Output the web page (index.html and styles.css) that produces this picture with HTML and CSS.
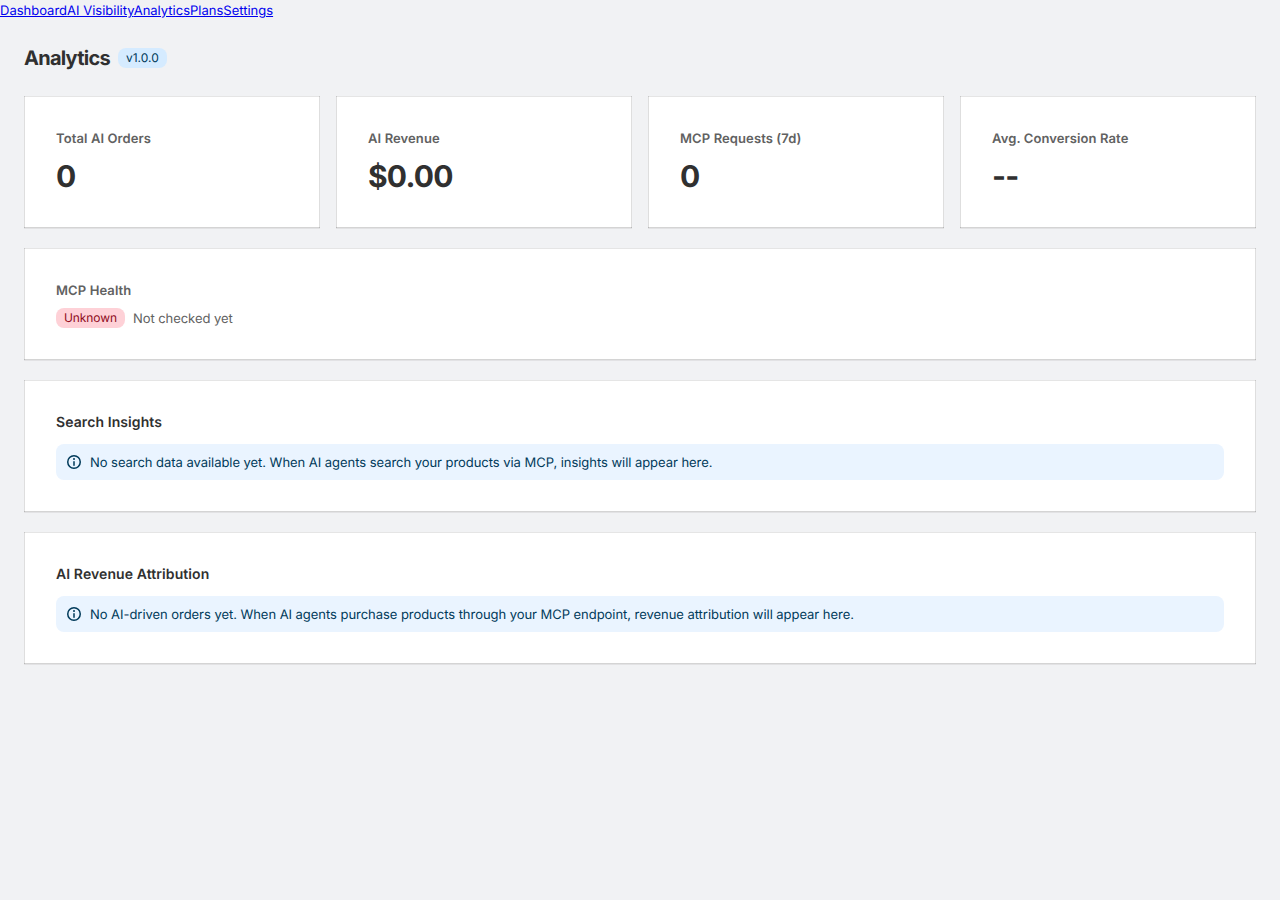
FILE: index.html
```html
<!DOCTYPE html>
<html lang="en">

<head>
    <meta charset="UTF-8">
    <meta name="viewport" content="width=device-width, initial-scale=1.0">
    <title>Analytics</title>
    <link rel="stylesheet" href="styles.css">
</head>

<body>
    <nav class="nav"><a href="#">Dashboard</a><a href="#">AI Visibility</a><a href="#">Analytics</a><a href="#">Plans</a><a href="#">Settings</a></nav>

    <div class="page">
        <div class="page-header">
            <h1>Analytics</h1>
            <span class="badge badge-info">v1.0.0</span>
        </div>

        <!-- Stats -->
        <div class="stats">
            <div class="card">
                <h3>Total AI Orders</h3>
                <p class="value">0</p>
            </div>
            <div class="card">
                <h3>AI Revenue</h3>
                <p class="value">$0.00</p>
            </div>
            <div class="card">
                <h3>MCP Requests (7d)</h3>
                <p class="value">0</p>
            </div>
            <div class="card">
                <h3>Avg. Conversion Rate</h3>
                <p class="value">--</p>
            </div>
        </div>

        <!-- MCP Health -->
        <div class="card">
            <h3>MCP Health</h3>
            <div class="health">
                <span class="badge badge-critical">Unknown</span>
                <span class="subdued">Not checked yet</span>
            </div>
        </div>

        <!-- Search Insights -->
        <div class="card">
            <h2>Search Insights</h2>
            <div class="banner">
                <svg class="icon" viewBox="0 0 20 20">
                    <path d="M10 14a.75.75 0 0 1-.75-.75v-3.5a.75.75 0 0 1 1.5 0v3.5a.75.75 0 0 1-.75.75Z" />
                    <path d="M9 7a1 1 0 1 1 2 0 1 1 0 0 1-2 0Z" />
                    <path fill-rule="evenodd" d="M17 10a7 7 0 1 1-14 0 7 7 0 0 1 14 0Zm-1.5 0a5.5 5.5 0 1 1-11 0 5.5 5.5 0 0 1 11 0Z" />
                </svg>
                <p>No search data available yet. When AI agents search your products via MCP, insights will appear here.</p>
            </div>
        </div>

        <!-- AI Revenue Attribution -->
        <div class="card">
            <h2>AI Revenue Attribution</h2>
            <div class="banner">
                <svg class="icon" viewBox="0 0 20 20">
                    <path d="M10 14a.75.75 0 0 1-.75-.75v-3.5a.75.75 0 0 1 1.5 0v3.5a.75.75 0 0 1-.75.75Z" />
                    <path d="M9 7a1 1 0 1 1 2 0 1 1 0 0 1-2 0Z" />
                    <path fill-rule="evenodd" d="M17 10a7 7 0 1 1-14 0 7 7 0 0 1 14 0Zm-1.5 0a5.5 5.5 0 1 1-11 0 5.5 5.5 0 0 1 11 0Z" />
                </svg>
                <p>No AI-driven orders yet. When AI agents purchase products through your MCP endpoint, revenue attribution will appear here.</p>
            </div>
        </div>
    </div>
</body>

</html>
```
FILE: styles.css
```css
* {
    box-sizing: border-box;
}

body {
    margin: 0;
    background: #f1f2f4;
    color: #303030;
    font-family: Inter, sans-serif;
    font-size: 13px;
    font-weight: 400;
    line-height: 20px;
    text-rendering: geometricPrecision;
}

h1,
h2,
h3,
p {
    margin: 0;
}

.nav {
    padding-top: 1px;
}

.nav a {
    color: #0000ee;
}

.page {
    display: flex;
    flex-direction: column;
    gap: 20px;
    padding: 23px 24px 24px;
}

/* Title */
.page-header {
    display: flex;
    align-items: center;
    gap: 8px;
    height: 28px;
    margin-bottom: 4px;
}

h1 {
    font-size: 20px;
    font-weight: 650;
    line-height: 24px;
    letter-spacing: -0.75px;
}

h2 {
    font-size: 14px;
    font-weight: 600;
    line-height: 20px;
    letter-spacing: 0.09px;
}

h3 {
    color: #616161;
    font-size: 13px;
    font-weight: 600;
    line-height: 20px;
    letter-spacing: 0.1px;
}

.badge {
    padding: 2px 8px;
    border-radius: 8px;
    font-size: 12px;
    line-height: 16px;
}

.badge-info {
    background: #d5ebff;
    color: #003a5a;
}

.badge-critical {
    background: #fed1d7;
    color: #8e0b21;
    letter-spacing: -0.1px;
}

/* Cards */
.stats {
    display: grid;
    grid-template-columns: repeat(4, 1fr);
    gap: 16px;
}

.card {
    padding: 33px 32px 31px;
    background: #fff;
    box-shadow: inset 1px 0 0 rgba(0, 0, 0, 0.13),
        inset -1px 0 0 rgba(0, 0, 0, 0.13),
        inset 0 -1px 0 rgba(0, 0, 0, 0.17),
        inset 0 1px 0 rgba(204, 204, 204, 0.5),
        0 1px 0 rgba(26, 26, 26, 0.07);
}

.value {
    margin-top: 8px;
    font-size: 30px;
    font-weight: 700;
    line-height: 40px;
    letter-spacing: -0.8px;
}

.health {
    display: flex;
    align-items: flex-start;
    gap: 8px;
    margin-top: 7px;
    margin-bottom: -0px;
}

.subdued {
    padding-top: 1px;
    color: #616161;
    letter-spacing: -0.05px;
}

/* Banners */
.banner {
    display: flex;
    align-items: flex-start;
    gap: 6px;
    margin-top: 11px;
    margin-bottom: 1px;
    padding: 8px 8px 7px;
    border-radius: 8px;
    background: #eaf4ff;
    color: #003a5a;
    letter-spacing: -0.045px;
}

.banner p {
    padding-top: 1px;
}

.icon {
    flex: none;
    width: 20px;
    height: 20px;
    fill: currentColor;
}
```
